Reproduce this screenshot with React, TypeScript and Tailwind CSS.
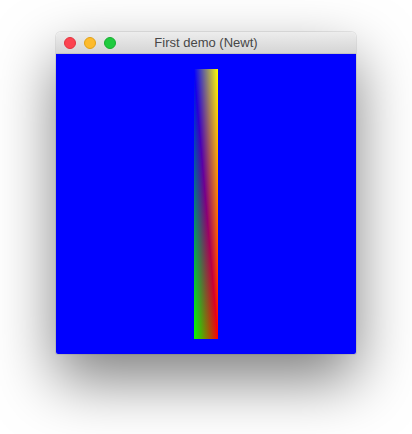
export default function App() {
  return (
    <div className="w-[412px] h-[434px] bg-white pl-[56px] pt-[32px] font-['Liberation_Sans',Arial,sans-serif]">
      <div className="w-[300px] rounded-t-[5px] rounded-b-[2px] shadow-[0_26px_60px_rgba(0,0,0,0.5),0_0_0_1px_rgba(0,0,0,0.08)] overflow-hidden">
        {/* title bar */}
        <div className="relative h-[22px] flex items-center bg-gradient-to-b from-[#ededed] to-[#d5d5d5] border-b border-[#c2c2c2]">
          <div className="flex gap-[8px] pl-[8px]">
            <span className="w-[12px] h-[12px] rounded-full bg-[#fc4350] border border-[#e2333f]" />
            <span className="w-[12px] h-[12px] rounded-full bg-[#fdbb2d] border border-[#e1a118]" />
            <span className="w-[12px] h-[12px] rounded-full bg-[#1fcb3f] border border-[#18ad31]" />
          </div>
          <span className="absolute inset-0 flex items-center justify-center text-[13px] text-[#474747]">
            First demo (Newt)
          </span>
        </div>
        {/* gl canvas: quad drawn as two gouraud-shaded triangles */}
        <div className="h-[300px] bg-[#0000ff] pt-[15px] pl-[138px]">
          <div className="relative w-[24px] h-[270px]">
            {/* lower-left triangle (TL, BL, BR), drawn full so the seam stays clean */}
            <div className="absolute inset-0 bg-blend-screen [background-image:linear-gradient(to_right,#000,#f00),linear-gradient(to_bottom_left,#000_50%,#0f0),linear-gradient(to_bottom,#00f,#000)]" />
            {/* upper-right triangle (TL, TR, BR) */}
            <div className="absolute inset-0 bg-blend-screen [clip-path:polygon(0_0,100%_0,100%_100%)] [background-image:linear-gradient(to_right,#000,#f00),linear-gradient(to_top_right,#000_50%,#0f0),linear-gradient(to_right,#00f,#000)]" />
          </div>
        </div>
      </div>
    </div>
  );
}
